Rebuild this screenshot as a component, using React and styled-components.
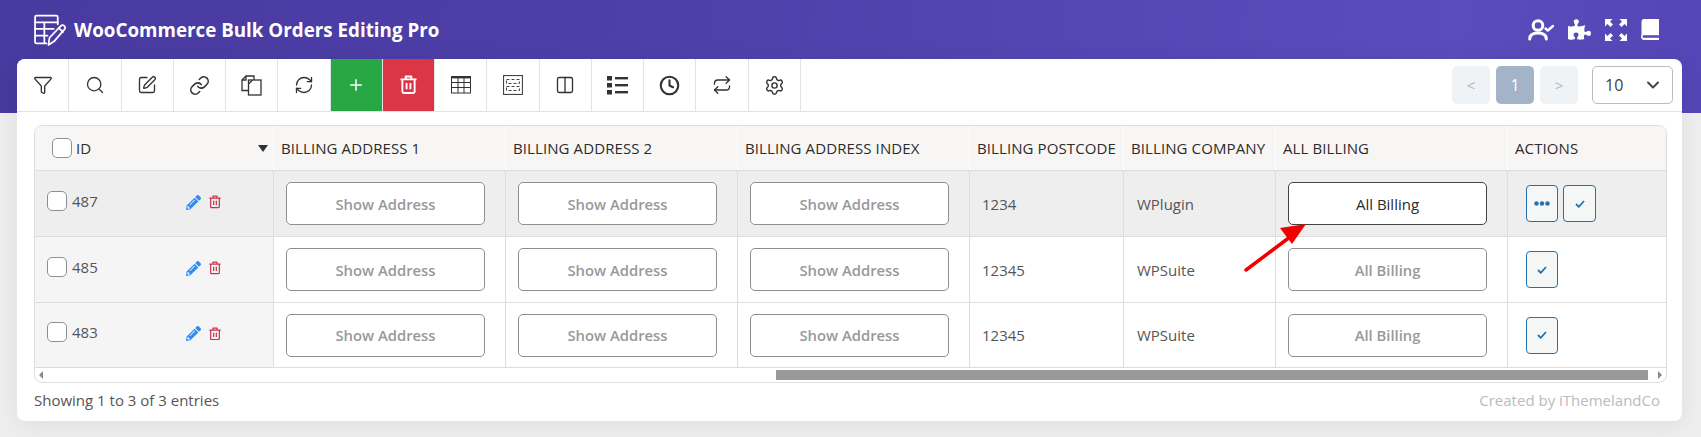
import React from "react";
import styled, { createGlobalStyle } from "styled-components";
import { Funnel, Search, SquarePen, Link, RefreshCw, Plus, Columns2, Clock, Repeat, Settings, ChevronDown } from "lucide-react";
import { FaPuzzlePiece, FaPencilAlt } from "react-icons/fa";

const Global = createGlobalStyle`
  * { box-sizing: border-box; }
  html, body { margin: 0; padding: 0; }
  body {
    background: #eeeeee;
    font-family: "Open Sans", "Liberation Sans", sans-serif;
    overflow: hidden;
  }
`;

const Page = styled.div`
  position: relative;
  width: 1701px;
  height: 437px;
  padding: 0 19px 0 17px;
  background: linear-gradient(100deg, #483a9f 0%, #4d3fa9 35%, #5a4cbb 85%, #5545b6 100%) top / 100% 113px no-repeat;
`;

const Header = styled.header`
  height: 59px;
  display: flex;
  align-items: center;
  justify-content: space-between;
  padding: 0 23px 0 16px;
`;

const Brand = styled.div`
  display: flex;
  align-items: center;
  gap: 8px;
  color: #fff;
  font-size: 18.8px;
  font-weight: 700;
`;

const HeaderIcons = styled.div`
  display: flex;
  align-items: center;
  gap: 14px;
  color: #fff;
`;

const Card = styled.main`
  height: 362px;
  background: #fff;
  border-radius: 8px;
  box-shadow: 0 4px 24px rgba(0, 0, 0, 0.07);
`;

const Toolbar = styled.div`
  height: 53px;
  display: flex;
  justify-content: space-between;
  border-bottom: 1px solid #e3e3e3;
`;

const Tools = styled.div`
  display: flex;
`;

const Tool = styled.button`
  width: 52.25px;
  height: 52px;
  padding: 0;
  display: flex;
  align-items: center;
  justify-content: center;
  border: none;
  border-right: 1px solid #e3e3e3;
  border-top-left-radius: ${(p) => (p.$first ? "8px" : "0")};
  background: ${(p) => p.$bg || "#fff"};
  color: ${(p) => (p.$bg ? "#fff" : "#333")};
`;

const Pager = styled.div`
  display: flex;
  align-items: center;
  padding: 7px 9px 0 0;
  height: 45px;
`;

const PageBtn = styled.div`
  width: 38px;
  height: 38px;
  margin-right: 6px;
  border-radius: 5px;
  display: flex;
  align-items: center;
  justify-content: center;
  font-size: ${(p) => (p.$active ? "16px" : "15px")};
  background: ${(p) => (p.$active ? "#a3b4c8" : "#eff3f6")};
  color: ${(p) => (p.$active ? "#fff" : "#a9b9cb")};
`;

const PerPage = styled.div`
  width: 81px;
  height: 38px;
  margin-left: 8px;
  padding: 0 9px 0 12px;
  border: 1px solid #bbb;
  border-radius: 5px;
  display: flex;
  align-items: center;
  justify-content: space-between;
  font-size: 16px;
  color: #444;
`;

const Body = styled.div`
  padding: 13px 15px 0 17px;
`;

const TableBox = styled.div`
  width: 1633px;
  border: 1px solid #ddd;
  border-radius: 8px;
  overflow: hidden;
`;

const Row = styled.div`
  display: grid;
  grid-template-columns: 239px 232px 232px 232px 154px 152px 232px 158px;
  height: ${(p) => p.$h}px;
  border-bottom: 1px solid #ddd;
`;

const Th = styled.div`
  display: flex;
  align-items: center;
  padding-left: 7px;
  background: #f7f6f5;
  border-right: 1px solid #fff;
  font-size: 15px;
  font-weight: 500;
  letter-spacing: 0.1px;
  color: #2c2c2c;
  white-space: nowrap;

  &:last-child { border-right: none; }
`;

const IdHead = styled(Th)`
  padding: 0 5px 0 17px;
  gap: 4px;
`;

const Caret = styled.span`
  margin-left: auto;
  width: 0;
  height: 0;
  border-left: 5px solid transparent;
  border-right: 5px solid transparent;
  border-top: 7px solid #2d3338;
`;

const Td = styled.div`
  display: flex;
  align-items: center;
  padding-left: ${(p) => p.$pl ?? 12}px;
  gap: 5px;
  background: ${(p) => (p.$hot ? "#eeeeee" : "#fff")};
  border-right: 1px solid #ddd;
  font-size: 15px;
  color: #555;

  &:last-child { border-right: none; }
`;

const IdCell = styled(Td)`
  background: ${(p) => (p.$hot ? "#eeeeee" : "#f5f5f5")};
  padding: 0 0 6px 12px;
  gap: 5px;
`;

const RowTools = styled.div`
  display: flex;
  align-items: center;
  gap: 8px;
  margin-left: 83px;
  padding-top: 3px;
`;

const Check = styled.span`
  width: 20px;
  height: 20px;
  flex: none;
  background: #fff;
  border: 1px solid #8c8f94;
  border-radius: 5px;
`;

const ShowBtn = styled.button`
  width: 199px;
  height: 43px;
  background: #fff;
  border: 1px solid ${(p) => (p.$hot ? "#444" : "#8f8f8f")};
  border-radius: 5px;
  font-family: inherit;
  font-size: ${(p) => (p.$hot ? "15px" : "14.8px")};
  font-weight: ${(p) => (p.$hot ? 500 : 600)};
  color: ${(p) => (p.$hot ? "#2c2c2c" : "#999")};
`;

const ActionBtn = styled.button`
  width: ${(p) => p.$w || 32}px;
  height: 37px;
  padding: 0;
  display: flex;
  align-items: center;
  justify-content: center;
  background: #f5f7f7;
  border: 1px solid #2271b1;
  border-radius: 4px;
  color: #2271b1;
`;

const ScrollBar = styled.div`
  height: 14px;
  display: flex;
  align-items: center;
`;

const ScrollArrow = styled.span`
  height: 0;
  width: 0;
  flex: none;
  border-top: 4px solid transparent;
  border-bottom: 4px solid transparent;
  ${(p) => (p.$right ? "border-left: 4px solid #888; margin-left: 10px;" : "border-right: 4px solid #888; margin-left: 4px;")}
`;

const ScrollGap = styled.div`
  width: 733px;
`;

const ScrollThumb = styled.div`
  width: 872px;
  height: 10px;
  background: #999;
`;

const Foot = styled.footer`
  display: flex;
  justify-content: space-between;
  align-items: center;
  height: 34px;
  padding-right: 7px;
  font-size: 15px;
  color: #555;
`;

const Credit = styled.span`
  color: #bbb;
`;

const Arrow = styled.svg`
  position: absolute;
  left: 1240px;
  top: 220px;
`;

const LogoIcon = () => (
  <svg width="33" height="33" viewBox="0 0 32 32" fill="none" stroke="#fff" strokeWidth="1.7" strokeLinejoin="round" strokeLinecap="round">
    <path d="M24 11V4a1.5 1.5 0 0 0-1.5-1.5H3.5A1.5 1.5 0 0 0 2 4v24a1.5 1.5 0 0 0 1.5 1.5H13" />
    <path d="M2 9h22M2 15.5h18M2 22h12M11 9v20" />
    <path d="M15 31l1-7L27 12.5a2.4 2.4 0 0 1 3.4 0 2.4 2.4 0 0 1 .1 3.4L20.500 27.500z" />
    <path d="M25 14.500l4 4" />
  </svg>
);

const UserCheckIcon = () => (
  <svg width="26" height="22" viewBox="0 0 26 22" fill="none" stroke="#fff" strokeWidth="3" strokeLinecap="round" strokeLinejoin="round">
    <circle cx="10" cy="6.500" r="4.800" />
    <path d="M1.700 20c0-4 3-6 8.300-6s8.300 2 8.300 6" />
    <path d="M17.500 9.500l2.300 2L25 7" strokeWidth="2.400" />
  </svg>
);

const ExpandIcon = () => (
  <svg width="22" height="22" viewBox="0 0 22 22" fill="#fff">
    <path d="M0 0h7.500L5 2.500l3 3L5.500 8l-3-3L0 7.500zM22 0v7.500L19.500 5l-3 3L14 5.500l3-3L14.500 0zM0 22v-7.500L2.500 17l3-3L8 16.500l-3 3L7.500 22zM22 22h-7.500l2.500-2.500-3-3 2.500-2.500 3 3 2.500-2.500z" />
  </svg>
);

const BookIcon = () => (
  <svg width="18" height="21" viewBox="0 0 18 21" fill="#fff">
    <path d="M3 0h15v15.500H3c-1.200 0-2 .5-2.500 1V3c0-1.700 1-3 2.500-3z" />
    <path d="M0 17.500C0 15.900 1.300 15 3 15h15v1.200H3.200c-1 0-1.700.5-1.700 1.300s.7 1.300 1.700 1.300H18V21H3c-1.700 0-3-1.500-3-3.500z" />
  </svg>
);

const CopyIcon = () => (
  <svg width="21" height="21" viewBox="0 0 21 21" fill="none" stroke="#333" strokeWidth="1.3">
    <path d="M7.500 15.500H1V5l4-4h8v4" />
    <path d="M1 5h4V1" />
    <rect x="7.500" y="5" width="12.500" height="15" fill="#fff" />
    <path d="M7.500 9l4-4" />
  </svg>
);

const TrashIcon = ({ size = 18, color = "currentColor", weight = 2 }) => (
  <svg width={size} height={size * 1.12} viewBox="0 0 18 20" fill="none" stroke={color} strokeWidth={weight} strokeLinejoin="round">
    <path d="M0.500 4.500h17M6 4.500V1.500h6v3" />
    <path d="M2.500 4.500v13a1.500 1.500 0 0 0 1.500 1.500h10a1.500 1.500 0 0 0 1.500-1.500v-13" />
    <path d="M7 8.500v6.500M11 8.500v6.500" />
  </svg>
);

const GridIcon = () => (
  <svg width="20" height="18" viewBox="0 0 20 18" fill="none" stroke="#333" strokeWidth="1">
    <rect x="0.500" y="1" width="19" height="16" />
    <path d="M0 1.200h20" strokeWidth="2.400" />
    <path d="M0.500 6.500h19M0.500 11.500h19M7 2v15M13 2v15" />
  </svg>
);

const DashedIcon = () => (
  <svg width="20" height="20" viewBox="0 0 20 20" fill="none" stroke="#444" strokeWidth="1">
    <rect x="0.500" y="0.500" width="19" height="19" strokeWidth="1.200" />
    <rect x="3.500" y="4.500" width="13" height="4" strokeDasharray="3 2" />
    <rect x="3.500" y="11.500" width="13" height="4" strokeDasharray="3 2" />
  </svg>
);

const ListIcon = () => (
  <svg width="21" height="19" viewBox="0 0 21 19" fill="#333">
    <rect x="0" y="0" width="5" height="4.500" />
    <rect x="0" y="7" width="5" height="4.500" />
    <rect x="0" y="14" width="5" height="4.500" />
    <rect x="8" y="1" width="13" height="2.400" />
    <rect x="8" y="8" width="13" height="2.400" />
    <rect x="8" y="15" width="13" height="2.400" />
  </svg>
);

const SmallCheck = () => (
  <svg width="10" height="8" viewBox="0 0 10 8" fill="none" stroke="#2271b1" strokeWidth="1.800">
    <path d="M1 4l2.800 2.800L9 1" />
  </svg>
);

const Dots = () => (
  <svg width="16" height="5" viewBox="0 0 16 5" fill="#2271b1">
    <circle cx="2.500" cy="2.500" r="2.200" />
    <circle cx="8" cy="2.500" r="2.200" />
    <circle cx="13.500" cy="2.500" r="2.200" />
  </svg>
);

const stroke = { size: 20, strokeWidth: 1.6 };

const tools = [
  { icon: <Funnel {...stroke} /> },
  { icon: <Search {...stroke} /> },
  { icon: <SquarePen {...stroke} /> },
  { icon: <Link size={21} strokeWidth={1.8} /> },
  { icon: <CopyIcon /> },
  { icon: <RefreshCw {...stroke} /> },
  { icon: <Plus size={18} strokeWidth={2} />, bg: "#28a745" },
  { icon: <TrashIcon size={17} />, bg: "#dc3545" },
  { icon: <GridIcon /> },
  { icon: <DashedIcon /> },
  { icon: <Columns2 {...stroke} /> },
  { icon: <ListIcon /> },
  { icon: <Clock size={21} strokeWidth={2.4} /> },
  { icon: <Repeat {...stroke} /> },
  { icon: <Settings size={21} strokeWidth={1.6} /> },
];

const heads = ["BILLING ADDRESS 1", "BILLING ADDRESS 2", "BILLING ADDRESS INDEX", "BILLING POSTCODE", "BILLING COMPANY", "ALL BILLING", "ACTIONS"];

const rows = [
  { id: 487, postcode: "1234", company: "WPlugin", hot: true, h: 66 },
  { id: 485, postcode: "12345", company: "WPSuite", h: 66 },
  { id: 483, postcode: "12345", company: "WPSuite", h: 65 },
];

export default function App() {
  return (
    <Page>
      <Global />
      <Header>
        <Brand>
          <LogoIcon />
          WooCommerce Bulk Orders Editing Pro
        </Brand>
        <HeaderIcons>
          <UserCheckIcon />
          <FaPuzzlePiece size={23} />
          <ExpandIcon />
          <BookIcon />
        </HeaderIcons>
      </Header>
      <Card>
        <Toolbar>
          <Tools>
            {tools.map((t, i) => (
              <Tool key={i} $bg={t.bg} $first={i === 0}>{t.icon}</Tool>
            ))}
          </Tools>
          <Pager>
            <PageBtn>&lt;</PageBtn>
            <PageBtn $active>1</PageBtn>
            <PageBtn>&gt;</PageBtn>
            <PerPage>
              10
              <ChevronDown size={20} strokeWidth={2.4} color="#444" />
            </PerPage>
          </Pager>
        </Toolbar>
        <Body>
          <TableBox>
            <Row $h={45}>
              <IdHead>
                <Check />
                ID
                <Caret />
              </IdHead>
              {heads.map((h) => (
                <Th key={h}>{h}</Th>
              ))}
            </Row>
            {rows.map((r) => (
              <Row key={r.id} $h={r.h}>
                <IdCell $hot={r.hot}>
                  <Check />
                  {r.id}
                  <RowTools>
                    <FaPencilAlt size={15} color="#2f8cf0" />
                    <TrashIcon size={12} color="#c9304a" weight={1.8} />
                  </RowTools>
                </IdCell>
                <Td $hot={r.hot}><ShowBtn>Show Address</ShowBtn></Td>
                <Td $hot={r.hot}><ShowBtn>Show Address</ShowBtn></Td>
                <Td $hot={r.hot}><ShowBtn>Show Address</ShowBtn></Td>
                <Td $hot={r.hot}>{r.postcode}</Td>
                <Td $hot={r.hot} $pl={13}>{r.company}</Td>
                <Td $hot={r.hot}><ShowBtn $hot={r.hot}>All Billing</ShowBtn></Td>
                <Td $hot={r.hot} $pl={18}>
                  {r.hot && <ActionBtn><Dots /></ActionBtn>}
                  <ActionBtn $w={r.hot ? 33 : 32}><SmallCheck /></ActionBtn>
                </Td>
              </Row>
            ))}
            <ScrollBar>
              <ScrollArrow />
              <ScrollGap />
              <ScrollThumb />
              <ScrollArrow $right />
            </ScrollBar>
          </TableBox>
          <Foot>
            <span>Showing 1 to 3 of 3 entries</span>
            <Credit>Created by iThemelandCo</Credit>
          </Foot>
        </Body>
      </Card>
      <Arrow width="72" height="56" viewBox="0 0 72 56" fill="none">
        <path d="M6 50L50 17" stroke="#f20000" strokeWidth="3.500" strokeLinecap="round" />
        <path d="M66 4L40 8L52 24z" fill="#f20000" />
      </Arrow>
    </Page>
  );
}
